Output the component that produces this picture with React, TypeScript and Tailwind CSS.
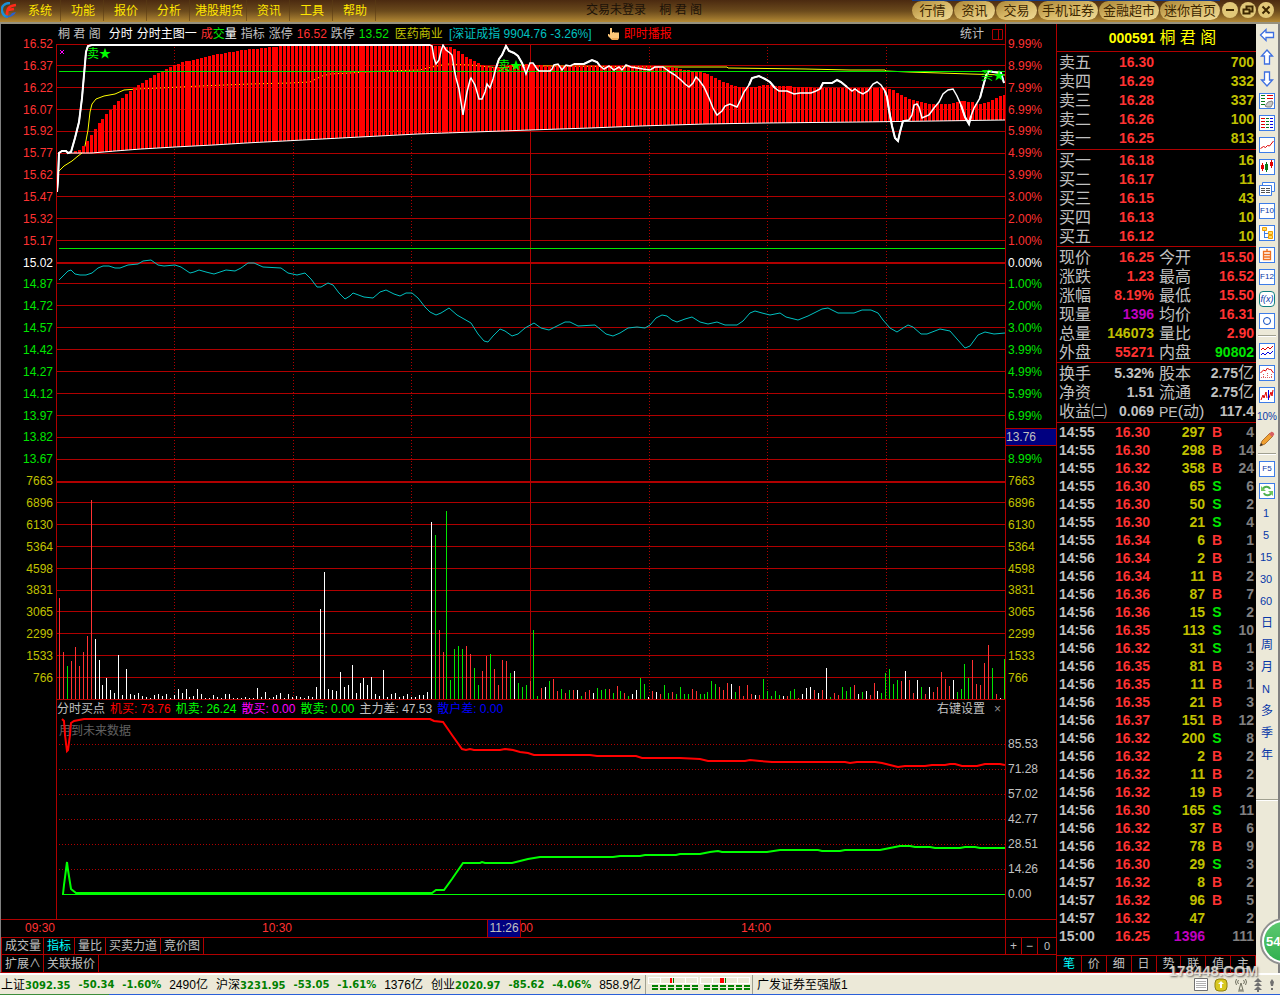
import { ReactNode } from 'react';
import clsx from 'clsx';

type Point = [number, number];

const RED = 'text-[#ff3232]';
const GREEN = 'text-[#00e600]';
const YELLOW = 'text-[#c0c000]';
const GRAY = 'text-[#c0c0c0]';

const MENUS = ['系统', '功能', '报价', '分析', '港股期货', '资讯', '工具', '帮助'];
const SHORTCUTS = ['行情', '资讯', '交易', '手机证券', '金融超市', '迷你首页'];

const PRICES = [
  '16.52', '16.37', '16.22', '16.07', '15.92', '15.77', '15.62', '15.47', '15.32', '15.17',
  '15.02', '14.87', '14.72', '14.57', '14.42', '14.27', '14.12', '13.97', '13.82', '13.67',
];
const PERCENTS = [
  '9.99%', '8.99%', '7.99%', '6.99%', '5.99%', '4.99%', '3.99%', '3.00%', '2.00%', '1.00%',
  '0.00%', '1.00%', '2.00%', '3.00%', '3.99%', '4.99%', '5.99%', '6.99%', '13.76', '8.99%',
];
const VOLUMES = ['7663', '6896', '6130', '5364', '4598', '3831', '3065', '2299', '1533', '766'];
const SUB_LEVELS = ['85.53', '71.28', '57.02', '42.77', '28.51', '14.26', '0.00'];

const GRID_Y = [
  44, 65, 87, 109, 131, 153, 174, 196, 218, 240, 283, 305, 327, 349, 371, 393, 415, 437, 459,
  502, 524, 546, 568, 590, 611, 633, 655, 677, 699,
];
const GRID_X_DOTTED = [174, 293, 411, 649, 767, 886];

const priceLine: Point[] = [
  [57, 192], [58, 180], [59, 153], [62, 151], [66, 151], [68, 153], [71, 152], [75, 138], [79, 122], [82, 98],
  [84, 75], [86, 52], [88, 46], [92, 45], [430, 45], [432, 46], [434, 58], [436, 64], [439, 60], [441, 51],
  [443, 45], [446, 50], [450, 53], [452, 55], [454, 68], [456, 78], [459, 89], [461, 102], [463, 115], [465, 103],
  [467, 92], [470, 80], [471, 78], [475, 85], [479, 99], [482, 99], [485, 92], [487, 84], [490, 88], [493, 79],
  [496, 68], [499, 59], [502, 55], [506, 46], [509, 51], [514, 53], [518, 56], [522, 63], [524, 68], [526, 74],
  [530, 63], [533, 63], [537, 69], [539, 71], [550, 71], [552, 69], [554, 65], [558, 64], [562, 70], [566, 65],
  [570, 66], [574, 64], [584, 64], [588, 62], [592, 60], [597, 62], [600, 66], [604, 69], [609, 66], [614, 70],
  [619, 67], [622, 70], [626, 65], [631, 67], [643, 69], [650, 70], [655, 67], [663, 67], [670, 72], [675, 75],
  [681, 80], [685, 84], [689, 87], [693, 83], [696, 77], [699, 80], [704, 87], [709, 98], [713, 108], [717, 115],
  [722, 111], [725, 106], [730, 104], [737, 107], [740, 101], [744, 92], [749, 85], [752, 78], [759, 76], [765, 79],
  [770, 82], [775, 88], [779, 91], [787, 91], [794, 94], [800, 93], [811, 93], [816, 91], [820, 89], [823, 83],
  [832, 83], [837, 80], [841, 82], [847, 87], [852, 91], [855, 89], [859, 92], [863, 94], [868, 91], [873, 84],
  [877, 82], [881, 85], [885, 91], [887, 97], [889, 110], [892, 126], [895, 138], [898, 141], [900, 132], [903, 121],
  [909, 120], [912, 115], [914, 105], [917, 104], [919, 107], [922, 118], [929, 115], [934, 108], [939, 102], [943, 94],
  [948, 90], [953, 89], [957, 96], [961, 105], [965, 117], [969, 124], [971, 116], [974, 108], [980, 98], [984, 83],
  [986, 76], [989, 71], [993, 72], [1001, 73], [1004, 83],
];

const BOLD_RANGES: Point[] = [[56, 430], [496, 524], [574, 600], [749, 775], [820, 847], [885, 904], [961, 971], [980, 1006]];

const bandTop: Point[] = [
  [71, 152], [75, 151], [79, 149], [83, 145], [87, 139], [91, 133], [95, 127], [99, 121], [103, 116], [107, 112],
  [111, 107], [115, 103], [119, 99], [123, 96], [127, 92], [131, 89], [139, 84], [147, 79], [155, 74], [163, 70],
  [174, 65], [182, 62], [194, 59], [206, 56], [218, 54], [230, 52], [242, 50], [262, 48], [282, 46], [310, 45],
  [430, 45], [438, 46], [450, 47], [458, 51], [466, 58], [474, 61], [482, 65], [488, 67], [500, 67], [510, 65],
  [520, 64], [530, 64], [545, 66], [650, 66], [670, 67], [690, 71], [700, 72], [708, 75], [720, 81], [730, 85],
  [740, 87], [752, 87], [765, 85], [780, 86], [800, 87], [820, 88], [886, 88], [892, 90], [900, 95], [910, 100],
  [918, 101], [928, 104], [950, 104], [960, 101], [970, 102], [975, 104], [985, 103], [995, 98], [1005, 94],
];

const bandBottom: Point[] = [
  [68, 153], [92, 153], [115, 151], [141, 149], [175, 147], [213, 145], [246, 143], [303, 140], [360, 137], [418, 134],
  [530, 130], [590, 128], [640, 126], [705, 124], [765, 123], [860, 122], [935, 121], [1005, 120],
];

const averageLine: Point[] = [
  [59, 171], [64, 166], [72, 161], [78, 156], [82, 153], [85, 146], [88, 130], [90, 112], [92, 104], [96, 99],
  [104, 96], [115, 94], [124, 90], [137, 89], [160, 88], [200, 86], [250, 84], [290, 83], [310, 82], [322, 76],
  [330, 74], [350, 73], [382, 71], [420, 70], [432, 67], [447, 64], [470, 65], [490, 67], [500, 68], [520, 65],
  [540, 66], [680, 67], [727, 67], [728, 68], [805, 69], [850, 70], [885, 70], [886, 71], [909, 72], [940, 73],
  [970, 74], [1005, 75],
];

const indexLine: Point[] = [
  [59, 280], [64, 275], [68, 271], [71, 270], [75, 274], [80, 275], [86, 275], [92, 273], [98, 268], [103, 266],
  [109, 266], [115, 268], [120, 268], [128, 265], [138, 264], [143, 261], [151, 260], [158, 265], [164, 266], [175, 265],
  [181, 267], [190, 273], [194, 272], [199, 270], [206, 272], [214, 274], [220, 272], [226, 270], [235, 271], [241, 268],
  [248, 263], [254, 263], [263, 267], [281, 268], [288, 273], [297, 275], [305, 273], [311, 279], [317, 287], [321, 287],
  [328, 283], [333, 285], [339, 293], [345, 299], [350, 296], [353, 293], [364, 297], [373, 298], [380, 292], [386, 290],
  [394, 294], [400, 296], [406, 293], [412, 293], [418, 298], [425, 307], [430, 312], [436, 315], [441, 313], [449, 308],
  [457, 315], [471, 323], [478, 334], [484, 341], [488, 342], [493, 336], [500, 329], [505, 331], [512, 336], [518, 334],
  [525, 328], [534, 323], [541, 328], [549, 330], [557, 326], [565, 322], [570, 322], [578, 326], [595, 325], [600, 329],
  [606, 334], [613, 336], [620, 333], [628, 328], [637, 327], [645, 328], [650, 325], [656, 318], [662, 315], [667, 316],
  [672, 320], [677, 322], [685, 319], [692, 317], [700, 322], [708, 324], [717, 322], [725, 325], [737, 325], [743, 321],
  [750, 313], [755, 311], [762, 313], [770, 315], [780, 313], [786, 317], [798, 320], [808, 316], [822, 309], [828, 308],
  [838, 313], [854, 313], [862, 310], [871, 310], [878, 313], [883, 320], [890, 328], [897, 332], [903, 328], [908, 325],
  [913, 327], [921, 334], [927, 334], [940, 329], [950, 331], [957, 339], [965, 348], [970, 346], [978, 335], [985, 332],
  [994, 334], [1005, 333],
];

const buyLine: Point[] = [
  [62, 719], [64, 721], [65, 735], [67, 751], [68, 750], [70, 735], [71, 723], [74, 721], [84, 719], [430, 719],
  [434, 721], [443, 722], [452, 735], [462, 749], [466, 750], [470, 749], [474, 750], [500, 750], [505, 749], [513, 750],
  [520, 752], [528, 753], [534, 755], [590, 755], [597, 756], [636, 756], [642, 758], [680, 758], [700, 759], [708, 761],
  [745, 761], [750, 760], [760, 761], [772, 762], [845, 762], [850, 763], [857, 762], [875, 762], [882, 763], [890, 765],
  [898, 767], [905, 766], [925, 766], [932, 765], [945, 765], [950, 764], [955, 764], [962, 766], [977, 766], [985, 764],
  [1000, 764], [1005, 765],
];

const sellLine: Point[] = [
  [63, 894], [64, 885], [67, 862], [68, 870], [71, 889], [76, 893], [432, 893], [436, 890], [444, 890], [452, 879],
  [463, 863], [480, 863], [482, 862], [485, 863], [512, 863], [520, 861], [528, 859], [540, 857], [613, 857], [620, 856],
  [640, 856], [645, 855], [676, 855], [680, 854], [700, 854], [710, 852], [718, 851], [722, 852], [767, 852], [780, 850],
  [818, 850], [822, 851], [840, 851], [845, 850], [880, 850], [890, 848], [900, 846], [910, 846], [915, 847], [930, 847],
  [935, 848], [960, 848], [965, 847], [975, 847], [980, 848], [1005, 848],
];

// one entry per minute: colour letter + bar height
const volumeBars = (
  'r101 r47 g33 r38 r52 r33 r47 r63 r199 w60 w39 w14 w21 w9 w6 w44 w4 w30 w5 w4 w6 w3 w2 w1 w4 w5 w3 w5 w1 w4 ' +
  'w10 w6 w10 w2 w3 w10 w5 w1 w1 w4 w2 w1 w5 w5 w1 w1 w1 w2 w1 w1 w11 w2 w7 w1 w2 w4 w6 w1 w5 w2 ' +
  'w3 w2 w1 w3 w2 w12 w90 w127 w10 w9 w8 w27 w12 w14 w34 w6 w16 w21 w14 w22 w5 w3 w29 w2 w5 w6 w2 w3 w5 w2 ' +
  'w2 w4 w4 w7 w177 g164 r69 r47 g188 g19 g50 g53 g50 r53 r45 g31 g14 r28 r43 g45 r30 r14 r39 r38 g26 w28 g16 g12 g14 r18 ' +
  'g69 g3 r11 w12 g18 r20 r8 g10 r6 g9 r9 w9 g3 r7 r9 w6 g11 g9 g10 r10 g6 r13 g8 r6 g3 w5 w9 g21 g15 w2 ' +
  'r8 w7 r5 g14 g6 r7 g5 g12 g5 g5 r10 r8 g5 g5 g7 g18 g15 r12 r9 r16 w15 g7 r13 r3 r14 r5 w4 r4 g20 g8 ' +
  'g3 g8 g4 w3 r3 g8 g10 r1 w5 w11 w12 r9 w6 r9 w31 g2 r6 r4 g12 g8 g12 r14 w5 g7 w8 r4 r16 w8 g6 g26 ' +
  'g30 g15 g19 r18 w28 r19 r6 w19 g12 r5 w12 r7 r12 r27 r20 r13 w19 g7 g10 g35 g21 r39 r15 r14 r36 r54 g31 r5 w1 g40'
).split(' ');

const BAR_COLORS: Record<string, string> = { r: '#ff3232', g: '#00e600', w: '#ffffff' };

const MINUTE = 3.954;
const barX = (i: number) => 59 + Math.round(i * MINUTE);

function valueAt(line: Point[], x: number) {
  const next = line.findIndex((p) => p[0] >= x);
  if (next <= 0) return line[next === 0 ? 0 : line.length - 1][1];
  const [x0, y0] = line[next - 1];
  const [x1, y1] = line[next];
  return Math.round(y0 + ((y1 - y0) * (x - x0)) / (x1 - x0));
}

const toPoints = (line: Point[]) => line.map((p) => p.join(',')).join(' ');

const SELLS = [
  ['卖五', '16.30', '700'],
  ['卖四', '16.29', '332'],
  ['卖三', '16.28', '337'],
  ['卖二', '16.26', '100'],
  ['卖一', '16.25', '813'],
];
const BUYS = [
  ['买一', '16.18', '16'],
  ['买二', '16.17', '11'],
  ['买三', '16.15', '43'],
  ['买四', '16.13', '10'],
  ['买五', '16.12', '10'],
];

const QUOTES = [
  ['现价', '16.25', RED, '今开', '15.50', RED],
  ['涨跌', '1.23', RED, '最高', '16.52', RED],
  ['涨幅', '8.19%', RED, '最低', '15.50', RED],
  ['现量', '1396', 'text-[#c000c0]', '均价', '16.31', RED],
  ['总量', '146073', YELLOW, '量比', '2.90', RED],
  ['外盘', '55271', RED, '内盘', '90802', GREEN],
];
const FUNDAMENTALS = [
  ['换手', '5.32%', GRAY, '股本', '2.75亿', GRAY],
  ['净资', '1.51', GRAY, '流通', '2.75亿', GRAY],
  ['收益㈡', '0.069', GRAY, 'PE(动)', '117.4', GRAY],
];

const TICKS = [
  ['14:55', '16.30', '297', 'B', '4'],
  ['14:55', '16.30', '298', 'B', '14'],
  ['14:55', '16.32', '358', 'B', '24'],
  ['14:55', '16.30', '65', 'S', '6'],
  ['14:55', '16.30', '50', 'S', '2'],
  ['14:55', '16.30', '21', 'S', '4'],
  ['14:55', '16.34', '6', 'B', '1'],
  ['14:56', '16.34', '2', 'B', '1'],
  ['14:56', '16.34', '11', 'B', '2'],
  ['14:56', '16.36', '87', 'B', '7'],
  ['14:56', '16.36', '15', 'S', '2'],
  ['14:56', '16.35', '113', 'S', '10'],
  ['14:56', '16.32', '31', 'S', '1'],
  ['14:56', '16.35', '81', 'B', '3'],
  ['14:56', '16.35', '11', 'B', '1'],
  ['14:56', '16.35', '21', 'B', '3'],
  ['14:56', '16.37', '151', 'B', '12'],
  ['14:56', '16.32', '200', 'S', '8'],
  ['14:56', '16.32', '2', 'B', '2'],
  ['14:56', '16.32', '11', 'B', '2'],
  ['14:56', '16.32', '19', 'B', '2'],
  ['14:56', '16.30', '165', 'S', '11'],
  ['14:56', '16.32', '37', 'B', '6'],
  ['14:56', '16.32', '78', 'B', '9'],
  ['14:56', '16.30', '29', 'S', '3'],
  ['14:57', '16.32', '8', 'B', '2'],
  ['14:57', '16.32', '96', 'B', '5'],
  ['14:57', '16.32', '47', '', '2'],
  ['15:00', '16.25', '1396', '', '111'],
];

const INDICES = [
  ['上证', '3092.35', '-50.34', '-1.60%', '2490亿'],
  ['沪深', '3231.95', '-53.05', '-1.61%', '1376亿'],
  ['创业', '2020.97', '-85.62', '-4.06%', '858.9亿'],
];

function Logo() {
  return (
    <svg className="h-4 w-4" viewBox="0 0 16 16" fill="none">
      <path d="M9 1C3 1 0 5 1 9c.5 3 3 5.500 6 6" stroke="#1a8fd8" strokeWidth="2.500" />
      <path d="M4 15c5 1 9-1 11-5l-4 1c-1 2-3 3-7 4z" fill="#2a5fd0" />
      <path d="M6 13c0-6 1-9 9-10M7 8l6-1" stroke="#ff2a1a" strokeWidth="2.500" />
    </svg>
  );
}

function TitleBar() {
  return (
    <header className="flex h-6 items-start border-b-2 border-[#96917f] bg-linear-to-b from-[#4b2a10] via-[#6b4a1c] to-[#b48a35] text-xs">
      <div className="flex w-[18px] justify-center pt-0.5">
        <Logo />
      </div>
      <nav className="flex">
        {MENUS.map((m) => (
          <button
            key={m}
            className={clsx('h-[21px] border-r border-[#5a3c14]/60 pl-0.5 text-[#ffe600]', m.length > 2 ? 'w-[57px]' : 'w-[43px]')}
          >
            {m}
          </button>
        ))}
      </nav>
      <h1 className="flex-1 text-center leading-5 whitespace-pre text-[#1c1208]">交易未登录    桐 君 阁</h1>
      <div className="flex gap-px border-t border-[#123a86] text-[13px] text-[#3c2600]">
        {SHORTCUTS.map((s, i) => (
          <button
            key={i}
            className={clsx(
              'h-[19px] rounded-full bg-linear-to-br from-[#a98434] via-[#d8b968] to-[#f0dc98] leading-[19px]',
              s.length > 2 ? 'w-[60px]' : 'w-[41px]',
            )}
          >
            {s}
          </button>
        ))}
      </div>
      <div className="flex gap-0.5 pt-0.5 pr-1.5 pl-0.5">
        <WindowButton label="最小化">
          <path d="M4 8h8" />
        </WindowButton>
        <WindowButton label="还原">
          <path d="M6.500 7V4.500h6v5H10M3.500 7.500h6v4h-6z" />
        </WindowButton>
        <WindowButton label="关闭">
          <path d="M4.500 4.500l7 7M11.500 4.500l-7 7" />
        </WindowButton>
      </div>
    </header>
  );
}

function WindowButton({ label, children }: { label: string; children: ReactNode }) {
  return (
    <button aria-label={label} className="h-4 w-4 rounded-full bg-[#e2c878]">
      <svg viewBox="0 0 16 16" fill="none" stroke="#3c2600" strokeWidth="2">
        {children}
      </svg>
    </button>
  );
}

function InfoRow() {
  return (
    <div className="flex h-5 items-center gap-1 pl-0.5 whitespace-nowrap text-[#c0c0c0]">
      <span className="pr-1">桐 君 阁</span>
      <span className="text-white">分时</span>
      <span className="text-white">分时主图一</span>
      <span className="text-white">
        <span className="text-[#ff3232]">成</span>
        <span className="text-[#00e600]">交</span>量
      </span>
      <span>指标</span>
      <span>涨停</span>
      <span className="text-[#ff3232]">16.52</span>
      <span>跌停</span>
      <span className="text-[#00e600]">13.52</span>
      <a href="#sector" className="pl-0.5 text-[#c0c000]">医药商业</a>
      <a href="#index" className="pl-0.5 text-[#00c0c0]">[深证成指 9904.76 -3.26%]</a>
      <a href="#news" className="ml-3 flex items-center gap-1 text-[#ff0000]">
        <svg className="h-3 w-3" viewBox="0 0 12 12">
          <path d="M2 0h2v5l1-1h1l1 1 1-1 1 1 1-1 1 1v5l-1 2H4L0 8V6h1l1 1z" fill="#ffc878" />
          <path d="M4 11h6" stroke="#e08830" />
        </svg>
        即时播报
      </a>
      <button className="ml-auto">统计</button>
      <svg className="mr-0.5 ml-1 h-[11px] w-[11px]" viewBox="0 0 11 11" fill="none" stroke="#b00000">
        <path d="M.5.500h10v10H.5zM6.500.500v10" />
      </svg>
    </div>
  );
}

function MainChart() {
  return (
    <div className="relative">
      <svg className="block h-[656px] w-full" viewBox="57 44 948 656" preserveAspectRatio="none" fill="none">
        <g fill="#b00000" shapeRendering="crispEdges">
          {GRID_Y.map((y) => (
            <rect key={y} x="57" y={y} width="948" height="1" />
          ))}
          <rect x="57" y="262" width="948" height="2" />
          <rect x="57" y="481" width="948" height="2" />
          <rect x="530" y="44" width="1" height="656" />
        </g>
        <g stroke="#b00000" strokeDasharray="1 2" shapeRendering="crispEdges">
          {GRID_X_DOTTED.map((x) => (
            <path key={x} d={`M${x + 0.5} 47V699`} />
          ))}
        </g>

        <polyline points={toPoints(averageLine)} stroke="#ffff00" />
        <g fill="#ff0000" shapeRendering="crispEdges">
          {volumeBars.map((_, i) => {
            const x = barX(i) - 1;
            if (x < 71 || x > 1003) return null;
            const top = valueAt(bandTop, x);
            return <rect key={i} x={x} y={top} width="3" height={valueAt(bandBottom, x) - top} />;
          })}
        </g>
        <path d="M59 71.500H1005M59 248.500H1005" stroke="#00e600" shapeRendering="crispEdges" />
        <polyline points={toPoints(bandBottom)} stroke="#fff" />
        <polyline points={toPoints(priceLine)} stroke="#fff" strokeWidth="1.500" />
        {BOLD_RANGES.map(([from, to]) => (
          <polyline
            key={from}
            points={toPoints(priceLine.filter(([x]) => x >= from && x <= to))}
            stroke="#fff"
            strokeWidth="2"
          />
        ))}
        <polyline points={toPoints(indexLine)} stroke="#00c0c0" />
        <path d="M60 50l4 4M64 50l-4 4" stroke="#ff00ff" />

        <g shapeRendering="crispEdges">
          {volumeBars.map((bar, i) => {
            const h = Number(bar.slice(1));
            return <rect key={i} x={Math.min(barX(i), 1004)} y={699 - h} width="1" height={h} fill={BAR_COLORS[bar[0]]} />;
          })}
        </g>
      </svg>
      <span className="absolute top-0 left-[30px] leading-5 text-[#00ff00]">卖★</span>
      <span className="absolute top-3 left-[441px] leading-5 text-[#00ff00]">卖★</span>
      <span className="absolute top-[22px] right-0 leading-5 whitespace-nowrap text-[#00ff00]">买★</span>
    </div>
  );
}

function SubChart() {
  return (
    <>
      <div className="flex h-[18px] items-center gap-[5px] whitespace-nowrap text-[#c0c0c0]">
        <span>分时买点</span>
        <span className="text-[#ff0000]">机买: 73.76</span>
        <span className="text-[#00ff00]">机卖: 26.24</span>
        <span className="text-[#ff00ff]">散买: 0.00</span>
        <span className="text-[#00ff00]">散卖: 0.00</span>
        <span>主力差: 47.53</span>
        <span className="text-[#0000ff]">散户差: 0.00</span>
        <button className="ml-auto">右键设置</button>
        <button className="w-[15px] text-[#909090]">×</button>
      </div>
      <div className="relative">
        <span className="absolute top-1 left-0.5 leading-[18px] text-[#606060]">用到未来数据</span>
        <svg className="relative block h-[201px] w-full" viewBox="57 718 948 201" preserveAspectRatio="none" fill="none">
          <g stroke="#b00000" strokeDasharray="1 2" shapeRendering="crispEdges">
            {[744, 769, 794, 819, 844, 869].map((y) => (
              <path key={y} d={`M59 ${y + 0.5}H1005`} />
            ))}
          </g>
          <path d="M62 894.500H1005" stroke="#00ff00" shapeRendering="crispEdges" />
          <polyline points={toPoints(buyLine)} stroke="#ff0000" strokeWidth="2" />
          <polyline points={toPoints(sellLine)} stroke="#00ff00" strokeWidth="2" />
        </svg>
      </div>
    </>
  );
}

const levelColor = (i: number) => (i < 10 ? RED : i === 10 ? 'text-white' : GREEN);

function LeftAxis() {
  return (
    <div className="w-[55px] shrink-0 pt-[9px] pr-[3px] text-right">
      <div className="flex h-[656px] flex-col">
        {PRICES.map((p, i) => (
          <div key={p} className={clsx('flex flex-1 items-center justify-end', levelColor(i))}>
            {p}
          </div>
        ))}
        {VOLUMES.map((v) => (
          <div key={v} className="flex flex-1 items-center justify-end text-[#c0c000]">
            {v}
          </div>
        ))}
      </div>
    </div>
  );
}

function RightAxis() {
  return (
    <div className="w-[51px] shrink-0 border-l border-[#b00000] pt-[9px]">
      <div className="flex h-[656px] flex-col">
        {PERCENTS.map((p, i) => (
          <div key={i} className={clsx('flex flex-1 items-center', levelColor(i))}>
            {p === '13.76' ? (
              <span className="h-[18px] w-full border-y border-[#b00000] bg-[#000080] leading-4 text-[#c0c0c0]">{p}</span>
            ) : (
              <span className="pl-0.5">{p}</span>
            )}
          </div>
        ))}
        {VOLUMES.map((v) => (
          <div key={v} className="flex flex-1 items-center pl-0.5 text-[#c0c000]">
            {v}
          </div>
        ))}
      </div>
      <div className="mt-[43px] text-[#c0c0c0]">
        {SUB_LEVELS.map((l) => (
          <div key={l} className="h-[25px] pl-0.5 leading-[25px]">
            {l}
          </div>
        ))}
      </div>
    </div>
  );
}

function TimeAxis() {
  return (
    <div className="flex h-[18px] border-t border-[#b00000] leading-[17px] text-[#ff3232]">
      <div className="grid flex-1 grid-cols-[237fr_241fr_238fr_264fr] pl-6">
        <span>09:30</span>
        <span>10:30</span>
        <span className="relative">
          13:00
          <span className="absolute top-0 -left-4 w-[34px] border-x border-[#b00000] bg-[#000080] text-center text-[#c0c0c0]">
            11:26
          </span>
        </span>
        <span>14:00</span>
      </div>
      <div className="w-[51px] border-l border-[#b00000]" />
    </div>
  );
}

function Tab({ active, children }: { active?: boolean; children: ReactNode }) {
  return (
    <button
      className={clsx(
        'h-full border-r border-[#b00000] px-[3px] first:pr-0.5',
        active ? 'text-[#00ffff]' : 'text-[#c0c0c0]',
      )}
    >
      {children}
    </button>
  );
}

function BottomTabs() {
  return (
    <>
      <div className="flex h-[17px] border-t border-l border-[#b00000] leading-4">
        <Tab>成交量</Tab>
        <Tab active>指标</Tab>
        <Tab>量比</Tab>
        <Tab>买卖力道</Tab>
        <Tab>竞价图</Tab>
        <div className="ml-auto flex text-[#c0c0c0]">
          <button className="w-4 border-l border-[#b00000]">+</button>
          <button className="w-4 border-l border-[#b00000]">−</button>
          <button className="w-[19px] border-l border-[#b00000] text-[11px]">0</button>
        </div>
      </div>
      <div className="flex h-[18px] border-t border-l border-[#b00000] leading-4">
        <Tab>
          <span className="inline-block w-9 text-left">扩展∧</span>
        </Tab>
        <Tab>关联报价</Tab>
      </div>
    </>
  );
}

function OrderTable({ rows }: { rows: string[][] }) {
  return (
    <table className="w-full table-fixed">
      <tbody>
        {rows.map(([label, price, volume]) => (
          <tr key={label} className="h-[19px] leading-[19px]">
            <th scope="row" className="w-10 pl-0.5 text-left text-base leading-[19px] font-normal text-[#c0c0c0]">{label}</th>
            <td className="w-[57px] text-right text-[#ff3232]">{price}</td>
            <td className="pr-0.5 text-right text-[#c0c000]">{volume}</td>
          </tr>
        ))}
      </tbody>
    </table>
  );
}

function QuoteValue({ value }: { value: string }) {
  if (!value.endsWith('亿')) return <>{value}</>;
  return (
    <>
      {value.slice(0, -1)}
      <span className="text-base leading-none font-normal">亿</span>
    </>
  );
}

function QuoteTable({ rows }: { rows: string[][] }) {
  const labelClass = 'text-left text-base leading-[19px] font-normal whitespace-nowrap text-[#c0c0c0]';
  return (
    <table className="w-full table-fixed">
      <tbody>
        {rows.map(([a, av, ac, b, bv, bc]) => (
          <tr key={a} className="h-[19px] leading-[19px] whitespace-nowrap">
            <th scope="row" className={clsx('w-9 pl-0.5', labelClass)}>{a}</th>
            <td className={clsx('w-[61px] text-right', ac)}>{av}</td>
            <th scope="row" className={clsx('w-[37px] pl-[5px]', labelClass)}>
              {b.startsWith('PE') ? (
                <>
                  <span className="text-sm leading-none">PE</span>(动)
                </>
              ) : (
                b
              )}
            </th>
            <td className={clsx('pr-0.5 text-right', bc)}>
              <QuoteValue value={bv} />
            </td>
          </tr>
        ))}
      </tbody>
    </table>
  );
}

function QuotePanel() {
  return (
    <aside className="flex w-[200px] shrink-0 flex-col border-l border-[#b00000] text-sm font-bold">
      <h2 className="flex h-7 items-center justify-center gap-1 border-b border-[#b00000] pl-3 text-[#ffff00]">
        000591 <span className="text-base font-normal">桐 君 阁</span>
      </h2>
      <div className="border-b border-[#b00000] py-px">
        <OrderTable rows={SELLS} />
      </div>
      <div className="border-b border-[#b00000] pt-px">
        <OrderTable rows={BUYS} />
      </div>
      <div className="border-b border-[#b00000] pt-px">
        <QuoteTable rows={QUOTES} />
      </div>
      <div className="border-b border-[#b00000] py-px">
        <QuoteTable rows={FUNDAMENTALS} />
      </div>
      <table className="w-full table-fixed">
        <tbody>
          {TICKS.map(([time, price, volume, side, count], i) => (
            <tr key={i} className="h-[18px] leading-[18px]">
              <td className="w-[41px] pl-0.5 text-[#c0c0c0]">{time}</td>
              <td className="w-[52px] text-right text-[#ff3232]">{price}</td>
              <td className={clsx('w-[55px] text-right', volume === '1396' ? 'text-[#c000c0]' : YELLOW)}>{volume}</td>
              <td className={clsx('w-6 text-center', side === 'B' ? RED : GREEN)}>{side}</td>
              <td className="pr-0.5 text-right text-[#808080]">{count}</td>
            </tr>
          ))}
        </tbody>
      </table>
      <div className="mt-auto flex h-[17px] border-t border-[#b00000] text-xs font-normal">
        {['笔', '价', '细', '日', '势', '联', '值', '主'].map((t, i) => (
          <button
            key={t}
            className={clsx('flex-1 border-r border-[#b00000]', i === 0 ? 'text-[#00ffff]' : 'text-[#c0c0c0]')}
          >
            {t}
          </button>
        ))}
      </div>
    </aside>
  );
}

function ToolButton({ label, children }: { label: string; children: ReactNode }) {
  return (
    <button aria-label={label} className="flex h-[22px] w-full items-center justify-center">
      {children}
    </button>
  );
}

function Boxed({ label, frame = '#3d7de8', children }: { label: string; frame?: string; children: ReactNode }) {
  return (
    <ToolButton label={label}>
      <svg className="h-4 w-4" viewBox="0 0 16 16" fill="none">
        <rect x="0.500" y="0.500" width="15" height="15" fill="#fff" stroke={frame} />
        {children}
      </svg>
    </ToolButton>
  );
}

function BoxedText({ text }: { text: string }) {
  return (
    <ToolButton label={text}>
      <span className="flex h-4 w-4 items-center justify-center border border-[#3d7de8] bg-white text-[8px] leading-none text-[#0838a8]">
        {text}
      </span>
    </ToolButton>
  );
}

function Separator() {
  return (
    <div className="flex h-2 items-center px-0.5">
      <div className="h-0.5 w-full border-t border-[#a0a090] bg-white" />
    </div>
  );
}

function Toolbar() {
  const arrow = { fill: '#fff', stroke: '#3d6fe0', strokeWidth: 1.3 };
  return (
    <div className="w-6 shrink-0 border-r-2 border-[#808080] bg-[#ece9d8] text-[11px] text-[#0838a8]">
      <ToolButton label="返回">
        <svg className="h-4 w-4" viewBox="0 0 16 16" {...arrow}>
          <path d="M1.500 8L7 2.500v3h7.500v5H7v3z" />
        </svg>
      </ToolButton>
      <ToolButton label="上翻">
        <svg className="h-4 w-4" viewBox="0 0 16 16" {...arrow}>
          <path d="M8 1l5.500 6h-3v8h-5V7h-3z" />
        </svg>
      </ToolButton>
      <ToolButton label="下翻">
        <svg className="h-4 w-4" viewBox="0 0 16 16" {...arrow}>
          <path d="M8 15l5.500-6h-3V1h-5v8h-3z" />
        </svg>
      </ToolButton>
      <Boxed label="板块">
        <path d="M2 2.500h4M2 5.500h4M2 8.500h4M2 11.500h4" stroke="#087a18" strokeWidth="1.200" />
        <path d="M8 2.500h6M8 5.500h6" stroke="#e00000" strokeWidth="1.200" />
        <path d="M6 13l3-4 4-1 1 2-2 4H8z" fill="#c8c8c8" stroke="#808080" />
      </Boxed>
      <Boxed label="报价表">
        <path d="M2 3.500h4M2 6.500h4M2 9.500h4M2 12.500h4" stroke="#e00000" />
        <path d="M7 3.500h3M7 6.500h3M7 9.500h3M7 12.500h3" stroke="#087a18" />
        <path d="M11 3.500h3M11 6.500h3M11 9.500h3M11 12.500h3" stroke="#0000e0" />
      </Boxed>
      <Boxed label="走势">
        <path d="M1.500 11.500l3-2 2 1 2-2 2 .500 4-5" stroke="#e00000" />
      </Boxed>
      <Boxed label="K线">
        <path d="M2 6h3v4H2zM11 3h3v4h-3zM3 4h1v8H3zM12 1h1v8h-1z" fill="#e00000" />
        <path d="M6 5h3v6H6zM7 3h1v10H7z" fill="#087a18" />
      </Boxed>
      <ToolButton label="资讯">
        <svg className="h-4 w-4" viewBox="0 0 16 16" fill="#fff" stroke="#3d7de8">
          <path d="M3.500 1.500h12v9h-12z" />
          <path d="M.5 4.500h12v10H.5z" />
          <path d="M2 7.500h4M7 7.500h4M2 9.500h4M7 9.500h4M2 11.500h4M7 11.500h4" stroke="#555" />
        </svg>
      </ToolButton>
      <BoxedText text="F10" />
      <Boxed label="树形">
        <path d="M5.500 5v8M5.500 8.500h4M5.500 12.500h4" stroke="#3d7de8" />
        <path d="M3.500 2.500h4v3h-4zM9.500 6.500h4v3h-4zM9.500 10.500h4v3h-4z" fill="#ffd860" stroke="#f0a000" />
      </Boxed>
      <Boxed label="自选">
        <path d="M4.500 4.500h7v8h-7zM8 2v3M5 7.500h6M5 10h6" stroke="#f07020" strokeWidth="1.300" />
      </Boxed>
      <BoxedText text="F12" />
      <ToolButton label="公式">
        <span className="flex h-4 w-4 items-center justify-center rounded-sm border border-[#108080] bg-white text-[9px] leading-none italic">
          f(x)
        </span>
      </ToolButton>
      <Boxed label="圆">
        <circle cx="8" cy="8" r="3.500" stroke="#0848c0" />
      </Boxed>
      <Separator />
      <Boxed label="叠加">
        <path d="M2 7l2-2 2 2 3-3 2 2 3-3" stroke="#e00000" />
        <path d="M2 12l2-2 2 2 3-3 2 2 3-3" stroke="#0000e0" />
      </Boxed>
      <Boxed label="均线">
        <path d="M1.500 8l3-3 2 1 2-3 2 2 1-1 3 4" stroke="#e00000" />
        <path d="M2 12.500h12M4.500 9v4M8.500 8v5M12.500 9v4" stroke="#e06060" strokeDasharray="1 1" />
      </Boxed>
      <Boxed label="分段">
        <path d="M2 13l2-5 1 3 2-6 1 6M10 11l2-6 1 4 1-6" stroke="#e00000" />
        <path d="M9.500 3v10" stroke="#0000e0" />
      </Boxed>
      <ToolButton label="10%">
        <span className="text-[10px]">10%</span>
      </ToolButton>
      <ToolButton label="画线">
        <svg className="h-4 w-4" viewBox="0 0 16 16">
          <path d="M1 15l2-5 8-8 3 3-8 8z" fill="#f0a030" stroke="#905010" strokeWidth=".7" />
          <path d="M10 3l2-2c1-1 4 1 3 3l-2 2z" fill="#d86060" />
          <path d="M1 15l1-3 2 2z" fill="#333" />
        </svg>
      </ToolButton>
      <Separator />
      <BoxedText text="F5" />
      <Boxed label="刷新">
        <path d="M4 6c1-3 6-3 7 0M12 10c-1 3-6 3-7 0" stroke="#50b050" strokeWidth="2" />
        <path d="M2 3v5h5zM14 13V8H9z" fill="#70c860" />
      </Boxed>
      {['1', '5', '15', '30', '60', '日', '周', '月', 'N', '多', '季', '年'].map((t) => (
        <ToolButton key={t} label={t}>
          <span className={/[\u4e00-\u9fa5]/.test(t) ? 'text-xs' : 'pr-0.5'}>{t}</span>
        </ToolButton>
      ))}
      <div className="mt-[33px] h-0.5 border-t border-[#a0a090] bg-white" />
    </div>
  );
}

function Gauge({ fill }: { fill: string }) {
  return (
    <svg className="h-[17px] w-[50px]" viewBox="0 0 50 17" fill="none" shapeRendering="crispEdges">
      <path d="M.5 1.500h49v6H.5zM12.500 1v7M37.500 1v7" stroke="#fff" />
      <path d={fill} fill="#ff0000" />
      <path d="M25 2h1v5h-1z" fill="#008000" />
      <path d="M4 10h46M4 13h46" stroke="#008000" strokeWidth="2" strokeDasharray="6 2" />
    </svg>
  );
}

function StatusBar() {
  return (
    <footer className="flex h-[21px] items-center border-t-2 border-white bg-[#ece9d8] whitespace-nowrap text-black">
      {INDICES.map(([name, value, change, percent, amount]) => (
        <div key={name} className="flex w-[215px] items-center gap-2 pl-px">
          <span>
            {name}
            <b className="font-['DejaVu_Sans'] text-[10px] text-[#008000]">{value}</b>
          </span>
          <b className="font-['DejaVu_Sans'] text-[10px] text-[#008000]">{change}</b>
          <b className="font-['DejaVu_Sans'] text-[10px] text-[#008000]">{percent}</b>
          <span>{amount}</span>
        </div>
      ))}
      <div className="flex h-full items-center gap-0.5 border-x border-[#a0a090] px-0.5">
        <Gauge fill="M22 2h2v5h-2z" />
        <Gauge fill="M20 2h4v5h-4z" />
      </div>
      <span className="pl-1">广发证券至强版1</span>
      <div className="ml-auto flex items-center gap-1.5 pr-1">
        <svg className="h-[14px] w-[14px]" viewBox="0 0 14 14">
          <path d="M.5.500h13v12H.5z" fill="#fff" stroke="#707070" />
          <path d="M2 3.500h10M2 5.500h10M2 7.500h10M2 9.500h10" stroke="#b0b0b0" />
        </svg>
        <svg className="h-[14px] w-[14px]" viewBox="0 0 14 14">
          <rect x="1" y="1" width="12" height="12" rx="4" fill="#d8c820" stroke="#908010" />
          <path d="M7 3l3 3H8v4H6V6H4z" fill="#fff" />
        </svg>
        <svg className="h-[14px] w-[14px]" viewBox="0 0 14 14" fill="none" stroke="#707060">
          <path d="M7 5l-2 7h4zM4 13h6M4.500 2q-2 2 0 4M2.500 1q-2 3 0 6M9.500 2q2 2 0 4M11.500 1q2 3 0 6" />
        </svg>
        <svg className="h-[14px] w-2" viewBox="0 0 8 14" fill="#707070">
          <path d="M4 0l4 4H0zM4 4l4 4H0zM4 8l4 4H5v2H3v-2H0z" />
        </svg>
        <svg className="h-[14px] w-2" viewBox="0 0 8 14" fill="#707070">
          <path d="M4 1l2 3-1 4H3L2 4zM3 10h2v2H3z" />
        </svg>
      </div>
    </footer>
  );
}

export default function App() {
  return (
    <div className="relative overflow-hidden bg-black font-['Liberation_Sans','Noto_Sans_CJK_SC',sans-serif] text-xs">
      <TitleBar />
      <div className="flex">
        <main className="min-w-0 flex-1 border-b border-l border-b-[#b00000] border-l-[#808080]">
          <div className="flex">
            <LeftAxis />
            <div className="min-w-0 flex-1">
              <InfoRow />
              <div className="border-l border-[#b00000]">
                <MainChart />
                <SubChart />
              </div>
            </div>
            <RightAxis />
          </div>
          <TimeAxis />
          <BottomTabs />
        </main>
        <div className="flex border-b border-[#b00000]">
          <QuotePanel />
        </div>
        <Toolbar />
      </div>
      <StatusBar />
      <div className="flex h-px">
        <div className="w-[109px] bg-[#3c8c3c]" />
        <div className="flex-1 bg-[#2a5fd8]" />
      </div>

      <div className="absolute -right-[27px] bottom-[30px] h-[47px] w-[47px] rounded-full border-2 border-[#909090] bg-white p-0.5">
        <div className="h-full rounded-full bg-linear-to-b from-[#5cc870] to-[#30b050] pl-0.5 text-[13px] leading-[39px] font-bold text-white">
          54
        </div>
      </div>
      <div className="absolute right-[22px] bottom-[12px] text-[15px] leading-6 font-bold text-[#e4e0d8] opacity-90 [text-shadow:1px_1px_2px_#555]">
        178448.COM
      </div>
    </div>
  );
}
